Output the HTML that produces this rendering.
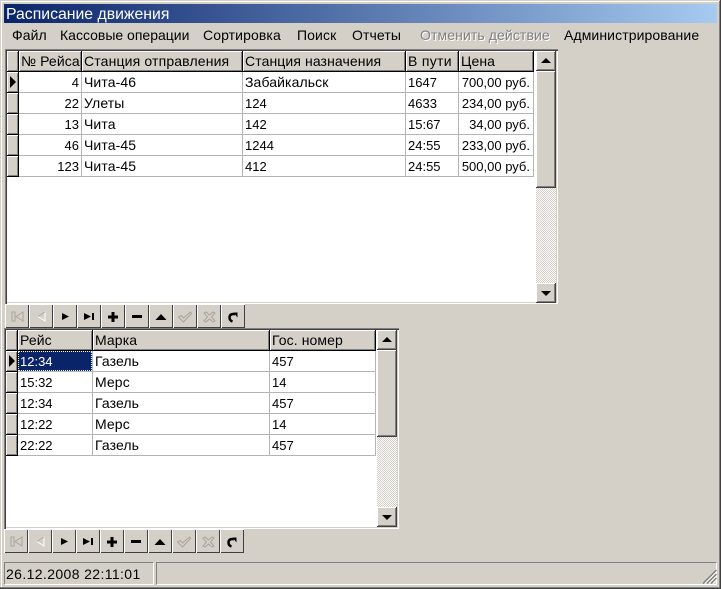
<!DOCTYPE html>
<html lang="ru"><head><meta charset="utf-8"><title>Расписание движения</title>
<style>
html,body{margin:0;padding:0}
body{width:721px;height:589px;overflow:hidden;position:relative;background:#d4d0c8;font:14px "Liberation Sans",Arial,sans-serif;color:#000}
div,span,svg{position:absolute}
.t{white-space:nowrap;line-height:16px;height:16px;letter-spacing:.1px}
.c{margin-top:-1px}
.n{font-size:13px;letter-spacing:0}
.r{text-align:right}
.bevel{background:#d4d0c8;box-sizing:border-box;box-shadow:inset -1px -1px #404040,inset 1px 1px #fff,inset -2px -2px #808080}
.h{background:#d4d0c8;box-sizing:border-box;border-right:1px solid #000;border-bottom:1px solid #000;box-shadow:inset 1px 1px #fff,inset -1px -1px #808080}
.g{background:#fff;box-sizing:border-box;box-shadow:inset 1px 1px #808080,inset 2px 2px #404040,inset -1px -1px #fff,inset -2px -2px #d4d0c8}
.hl{height:1px;background:#b4b4b4}
.vl{width:1px;background:#b4b4b4}
.hatch{background-color:#fff;background-image:conic-gradient(#d4d0c8 25%,#fff 0 50%,#d4d0c8 0 75%,#fff 0);background-size:2px 2px}
.nb{width:24px;height:24px;background:#d4d0c8;box-sizing:border-box;box-shadow:inset 1px 1px #fff,inset -1px -1px #404040}
.nb svg{left:0;top:0}
</style></head><body>
<div style="left:0;top:0;width:721px;height:1px;background:#d4d0c8"></div>
<div style="left:1px;top:1px;width:719px;height:1px;background:#fff"></div>
<div style="left:1px;top:1px;width:1px;height:586px;background:#fff"></div>
<div style="left:0;top:587px;width:721px;height:1px;background:#808080"></div>
<div style="left:0;top:588px;width:721px;height:1px;background:#404040"></div>
<div style="left:719px;top:1px;width:1px;height:587px;background:#808080"></div>
<div style="left:720px;top:0;width:1px;height:589px;background:#404040"></div>

<div style="left:4px;top:4px;width:713px;height:19px;background:linear-gradient(90deg,#0a246a,#a6caf0)"></div>
<div class="t" style="left:6px;top:7px;color:#fff;font-size:15.800px;letter-spacing:0">Расписание движения</div>

<div class="t" style="left:12px;top:27px">Файл</div>
<div class="t" style="left:60px;top:27px;letter-spacing:0">Кассовые операции</div>
<div class="t" style="left:203px;top:27px">Сортировка</div>
<div class="t" style="left:297px;top:27px">Поиск</div>
<div class="t" style="left:352px;top:27px">Отчеты</div>
<div class="t" style="left:420px;top:27px;color:#808080;text-shadow:1px 1px #fff">Отменить действие</div>
<div class="t" style="left:564px;top:27px">Администрирование</div>

<!-- Grid 1 -->
<div class="g" style="left:5px;top:49px;width:553px;height:255px"></div>
<div class="h" style="left:7px;top:51px;width:12px;height:21px"></div>
<div class="h" style="left:19px;top:51px;width:63px;height:21px"></div>
<div class="h" style="left:82px;top:51px;width:161px;height:21px"></div>
<div class="h" style="left:243px;top:51px;width:163px;height:21px"></div>
<div class="h" style="left:406px;top:51px;width:53px;height:21px"></div>
<div class="h" style="left:459px;top:51px;width:75px;height:21px"></div>
<div class="t c" style="left:21px;top:54px">№ Рейса</div>
<div class="t c" style="left:84px;top:54px;letter-spacing:.15px">Станция отправления</div>
<div class="t c" style="left:245px;top:54px">Станция назначения</div>
<div class="t c" style="left:408px;top:54px;letter-spacing:.3px">В пути</div>
<div class="t c" style="left:461px;top:54px">Цена</div>

<div class="h" style="left:7px;top:72px;width:12px;height:21px"></div>
<div class="h" style="left:7px;top:93px;width:12px;height:21px"></div>
<div class="h" style="left:7px;top:114px;width:12px;height:21px"></div>
<div class="h" style="left:7px;top:135px;width:12px;height:21px"></div>
<div class="h" style="left:7px;top:156px;width:12px;height:21px"></div>
<svg style="left:10px;top:76px" width="6" height="12"><path d="M0 0L6 6L0 12Z" fill="#000"/></svg>

<div class="vl" style="left:81px;top:72px;height:105px"></div>
<div class="vl" style="left:242px;top:72px;height:105px"></div>
<div class="vl" style="left:405px;top:72px;height:105px"></div>
<div class="vl" style="left:458px;top:72px;height:105px"></div>
<div class="vl" style="left:533px;top:72px;height:105px"></div>
<div class="hl" style="left:19px;top:92px;width:515px"></div>
<div class="hl" style="left:19px;top:113px;width:515px"></div>
<div class="hl" style="left:19px;top:134px;width:515px"></div>
<div class="hl" style="left:19px;top:155px;width:515px"></div>
<div class="hl" style="left:19px;top:176px;width:515px"></div>

<div class="t n r" style="left:19px;width:60px;top:75px">4</div>
<div class="t c" style="left:84px;top:75px">Чита-46</div>
<div class="t c" style="left:245px;top:75px">Забайкальск</div>
<div class="t n" style="left:408px;top:75px">1647</div>
<div class="t n r" style="left:459px;width:71px;top:75px">700,00 руб.</div>

<div class="t n r" style="left:19px;width:60px;top:96px">22</div>
<div class="t c" style="left:84px;top:96px">Улеты</div>
<div class="t n" style="left:245px;top:96px">124</div>
<div class="t n" style="left:408px;top:96px">4633</div>
<div class="t n r" style="left:459px;width:71px;top:96px">234,00 руб.</div>

<div class="t n r" style="left:19px;width:60px;top:117px">13</div>
<div class="t c" style="left:84px;top:117px">Чита</div>
<div class="t n" style="left:245px;top:117px">142</div>
<div class="t n" style="left:408px;top:117px">15:67</div>
<div class="t n r" style="left:459px;width:71px;top:117px">34,00 руб.</div>

<div class="t n r" style="left:19px;width:60px;top:138px">46</div>
<div class="t c" style="left:84px;top:138px">Чита-45</div>
<div class="t n" style="left:245px;top:138px">1244</div>
<div class="t n" style="left:408px;top:138px">24:55</div>
<div class="t n r" style="left:459px;width:71px;top:138px">233,00 руб.</div>

<div class="t n r" style="left:19px;width:60px;top:159px">123</div>
<div class="t c" style="left:84px;top:159px">Чита-45</div>
<div class="t n" style="left:245px;top:159px">412</div>
<div class="t n" style="left:408px;top:159px">24:55</div>
<div class="t n r" style="left:459px;width:71px;top:159px">500,00 руб.</div>

<div class="hatch" style="left:536px;top:51px;width:20px;height:251px"></div>
<div class="bevel" style="left:536px;top:51px;width:20px;height:20px"><svg style="left:5px;top:7px" width="10" height="5"><path d="M5 0L10 5H0Z" fill="#000"/></svg></div>
<div class="bevel" style="left:536px;top:71px;width:20px;height:117px"></div>
<div class="bevel" style="left:536px;top:283px;width:20px;height:20px"><svg style="left:5px;top:8px" width="10" height="5"><path d="M0 0H10L5 5Z" fill="#000"/></svg></div>

<!-- Nav 1 -->
<div style="left:5px;top:304px;width:240px;height:25px">
<div class="nb" style="left:0"><svg width="24" height="24"><path d="M7 8h3v9H7zM18 8l-7 4.500 7 4.500z" fill="none" stroke="#a8a49c"/></svg></div>
<div class="nb" style="left:24px"><svg width="24" height="24"><path d="M16 8l-7 4.500 7 4.500z" fill="none" stroke="#fff"/><path d="M16 8l-7 4.500" fill="none" stroke="#a8a49c"/></svg></div>
<div class="nb" style="left:48px"><svg width="24" height="24"><path d="M9 9l7 3.500-7 3.500z" fill="#000"/></svg></div>
<div class="nb" style="left:72px"><svg width="24" height="24"><path d="M7 9l7 3.500-7 3.500zM15 9h2v7h-2z" fill="#000"/></svg></div>
<div class="nb" style="left:96px"><svg width="24" height="24"><path d="M10.500 8h3v3.500H17v3h-3.500V18h-3v-3.500H7v-3h3.500z" fill="#000"/></svg></div>
<div class="nb" style="left:120px"><svg width="24" height="24"><path d="M7 11h10v3H7z" fill="#000"/></svg></div>
<div class="nb" style="left:144px"><svg width="24" height="24"><path d="M12 10l5.500 6h-11z" fill="#000"/></svg></div>
<div class="nb" style="left:168px"><svg width="24" height="24"><path d="M5.500 13l3-1.500 2 2.500 7-6 1 1.500-8 8.500z" fill="#d4d0c8" stroke="#a8a49c"/></svg></div>
<div class="nb" style="left:192px"><svg width="24" height="24"><path d="M7 9l2-1 3.500 3 3.500-3 2 1-3.500 4 3.500 4-2 1-3.500-3-3.500 3-2-1 3.500-4z" fill="#d4d0c8" stroke="#a8a49c"/></svg></div>
<div class="nb" style="left:216px"><svg width="24" height="24"><path d="M14 10.500C12 9.500 8.500 10 8.500 13.500c0 2.500 1.500 3.500 3 4" fill="none" stroke="#000" stroke-width="2.500"/><path d="M12.500 8.500h4v5z" fill="#000"/></svg></div>
</div>

<!-- Grid 2 -->
<div class="g" style="left:4px;top:328px;width:395px;height:201px"></div>
<div class="h" style="left:6px;top:330px;width:12px;height:21px"></div>
<div class="h" style="left:18px;top:330px;width:75px;height:21px"></div>
<div class="h" style="left:93px;top:330px;width:177px;height:21px"></div>
<div class="h" style="left:270px;top:330px;width:106px;height:21px"></div>
<div class="t c" style="left:20px;top:333px">Рейс</div>
<div class="t c" style="left:95px;top:333px">Марка</div>
<div class="t c" style="left:272px;top:333px">Гос. номер</div>

<div class="h" style="left:6px;top:351px;width:12px;height:21px"></div>
<div class="h" style="left:6px;top:372px;width:12px;height:21px"></div>
<div class="h" style="left:6px;top:393px;width:12px;height:21px"></div>
<div class="h" style="left:6px;top:414px;width:12px;height:21px"></div>
<div class="h" style="left:6px;top:435px;width:12px;height:21px"></div>
<svg style="left:9px;top:355px" width="6" height="12"><path d="M0 0L6 6L0 12Z" fill="#000"/></svg>

<div class="vl" style="left:92px;top:351px;height:105px"></div>
<div class="vl" style="left:269px;top:351px;height:105px"></div>
<div class="vl" style="left:375px;top:351px;height:105px"></div>
<div class="hl" style="left:18px;top:371px;width:358px"></div>
<div class="hl" style="left:18px;top:392px;width:358px"></div>
<div class="hl" style="left:18px;top:413px;width:358px"></div>
<div class="hl" style="left:18px;top:434px;width:358px"></div>
<div class="hl" style="left:18px;top:455px;width:358px"></div>

<div style="left:18px;top:351px;width:74px;height:20px;background:#0a246a;box-sizing:border-box;outline:1px dotted #fff;outline-offset:-1px"></div>
<div class="t n" style="left:20px;top:354px;color:#fff">12:34</div>
<div class="t c" style="left:95px;top:354px">Газель</div>
<div class="t n" style="left:272px;top:354px">457</div>
<div class="t n" style="left:20px;top:375px">15:32</div>
<div class="t c" style="left:95px;top:375px">Мерс</div>
<div class="t n" style="left:272px;top:375px">14</div>
<div class="t n" style="left:20px;top:396px">12:34</div>
<div class="t c" style="left:95px;top:396px">Газель</div>
<div class="t n" style="left:272px;top:396px">457</div>
<div class="t n" style="left:20px;top:417px">12:22</div>
<div class="t c" style="left:95px;top:417px">Мерс</div>
<div class="t n" style="left:272px;top:417px">14</div>
<div class="t n" style="left:20px;top:438px">22:22</div>
<div class="t c" style="left:95px;top:438px">Газель</div>
<div class="t n" style="left:272px;top:438px">457</div>

<div class="hatch" style="left:377px;top:330px;width:20px;height:197px"></div>
<div class="bevel" style="left:377px;top:330px;width:20px;height:20px"><svg style="left:5px;top:7px" width="10" height="5"><path d="M5 0L10 5H0Z" fill="#000"/></svg></div>
<div class="bevel" style="left:377px;top:350px;width:20px;height:87px"></div>
<div class="bevel" style="left:377px;top:507px;width:20px;height:20px"><svg style="left:5px;top:8px" width="10" height="5"><path d="M0 0H10L5 5Z" fill="#000"/></svg></div>

<!-- Nav 2 -->
<div style="left:4px;top:529px;width:240px;height:24px">
<div class="nb" style="left:0"><svg width="24" height="24"><path d="M7 8h3v9H7zM18 8l-7 4.500 7 4.500z" fill="none" stroke="#a8a49c"/></svg></div>
<div class="nb" style="left:24px"><svg width="24" height="24"><path d="M16 8l-7 4.500 7 4.500z" fill="none" stroke="#fff"/><path d="M16 8l-7 4.500" fill="none" stroke="#a8a49c"/></svg></div>
<div class="nb" style="left:48px"><svg width="24" height="24"><path d="M9 9l7 3.500-7 3.500z" fill="#000"/></svg></div>
<div class="nb" style="left:72px"><svg width="24" height="24"><path d="M7 9l7 3.500-7 3.500zM15 9h2v7h-2z" fill="#000"/></svg></div>
<div class="nb" style="left:96px"><svg width="24" height="24"><path d="M10.500 8h3v3.500H17v3h-3.500V18h-3v-3.500H7v-3h3.500z" fill="#000"/></svg></div>
<div class="nb" style="left:120px"><svg width="24" height="24"><path d="M7 11h10v3H7z" fill="#000"/></svg></div>
<div class="nb" style="left:144px"><svg width="24" height="24"><path d="M12 10l5.500 6h-11z" fill="#000"/></svg></div>
<div class="nb" style="left:168px"><svg width="24" height="24"><path d="M5.500 13l3-1.500 2 2.500 7-6 1 1.500-8 8.500z" fill="#d4d0c8" stroke="#a8a49c"/></svg></div>
<div class="nb" style="left:192px"><svg width="24" height="24"><path d="M7 9l2-1 3.500 3 3.500-3 2 1-3.500 4 3.500 4-2 1-3.500-3-3.500 3-2-1 3.500-4z" fill="#d4d0c8" stroke="#a8a49c"/></svg></div>
<div class="nb" style="left:216px"><svg width="24" height="24"><path d="M14 10.500C12 9.500 8.500 10 8.500 13.500c0 2.500 1.500 3.500 3 4" fill="none" stroke="#000" stroke-width="2.500"/><path d="M12.500 8.500h4v5z" fill="#000"/></svg></div>
</div>

<!-- Status bar -->
<div style="left:4px;top:562px;width:150px;height:23px;box-sizing:border-box;border:1px solid;border-color:#808080 #fff #fff #808080"></div>
<div style="left:156px;top:562px;width:561px;height:23px;box-sizing:border-box;border:1px solid;border-color:#808080 #fff #fff #808080"></div>
<div class="t" style="left:6px;top:566px;letter-spacing:.38px">26.12.2008 22:11:01</div>
<svg style="left:702px;top:569px" width="15" height="15"><path d="M14.500 1L1 14.500M14.500 5L5 14.500M14.500 9L9 14.500" stroke="#808080" stroke-width="1.500" fill="none"/><path d="M14.500 3L3 14.500M14.500 7L7 14.500M14.500 11L11 14.500" stroke="#fff" fill="none"/></svg>
</body></html>
